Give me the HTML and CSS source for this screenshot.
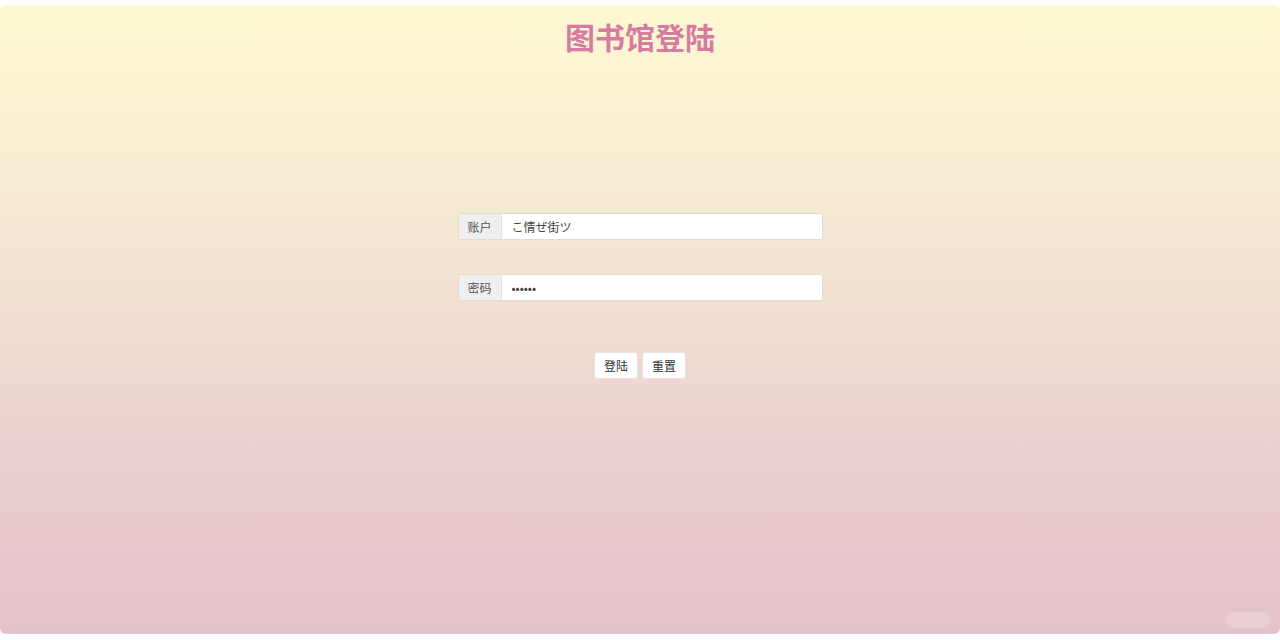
FILE: index.html
```html
<!DOCTYPE html>
<html lang="zh">
<head>
<meta charset="utf-8">
<title>图书馆登陆</title>
<link rel="stylesheet" href="styles.css">
</head>
<body>
<div class="page">
  <h1 class="title">图书馆登陆</h1>
  <form class="login">
    <div class="group">
      <span class="addon">账户</span>
      <input class="field" type="text" value="こ情ぜ街ツ">
    </div>
    <div class="group">
      <span class="addon">密码</span>
      <input class="field" type="password" value="123456">
    </div>
    <div class="actions">
      <button type="button" class="btn">登陆</button>
      <button type="reset" class="btn">重置</button>
    </div>
  </form>
  <div class="mark"></div>
</div>
</body>
</html>
```
FILE: styles.css
```css
html, body {
  margin: 0;
  padding: 0;
  background: #ffffff;
  height: 640px;
  overflow: hidden;
}
.page {
  position: relative;
  box-sizing: border-box;
  margin: 5px 0 0 0;
  height: 629px;
  border-radius: 6px;
  background: linear-gradient(to bottom, #fdf9d2 0%, #f6ead3 30%, #f1ded1 50%, #ebd0cf 70%, #e4c2ca 100%);
  display: flex;
  flex-direction: column;
  align-items: center;
  font-family: "Noto Sans CJK SC", "Noto Sans", sans-serif;
}
.title {
  margin: 12px 0 0 0;
  font-size: 30px;
  line-height: 38px;
  font-weight: 700;
  color: #d67ca2;
}
.login {
  margin-top: 158px;
  width: 365px;
  display: flex;
  flex-direction: column;
  gap: 34px;
}
.group {
  display: flex;
  height: 27px;
  box-sizing: border-box;
  border: 1px solid #e0dbd3;
  border-radius: 3px;
  overflow: hidden;
  background: #fff;
}
.addon {
  width: 43px;
  flex: none;
  box-sizing: border-box;
  background: #efefef;
  border-right: 1px solid #e2e2e2;
  color: #555;
  font-size: 12px;
  display: flex;
  align-items: center;
  justify-content: center;
}
.field {
  flex: 1;
  border: 0;
  outline: none;
  padding: 0 10px;
  font-size: 12px;
  color: #444;
  font-family: "Noto Sans CJK JP", "Noto Sans CJK SC", sans-serif;
  background: #fff;
}
.actions {
  margin-top: 17px;
  display: flex;
  justify-content: center;
  gap: 4px;
}
.btn {
  width: 44px;
  height: 27px;
  padding: 0;
  border: 1px solid #ebe4de;
  border-radius: 3px;
  background: #fff;
  color: #333;
  font-size: 12px;
  font-family: "Noto Sans CJK SC", sans-serif;
}
.mark {
  position: absolute;
  right: 10px;
  bottom: 6px;
  width: 44px;
  height: 16px;
  border-radius: 8px;
  background: rgba(255, 255, 255, 0.2);
}
```
